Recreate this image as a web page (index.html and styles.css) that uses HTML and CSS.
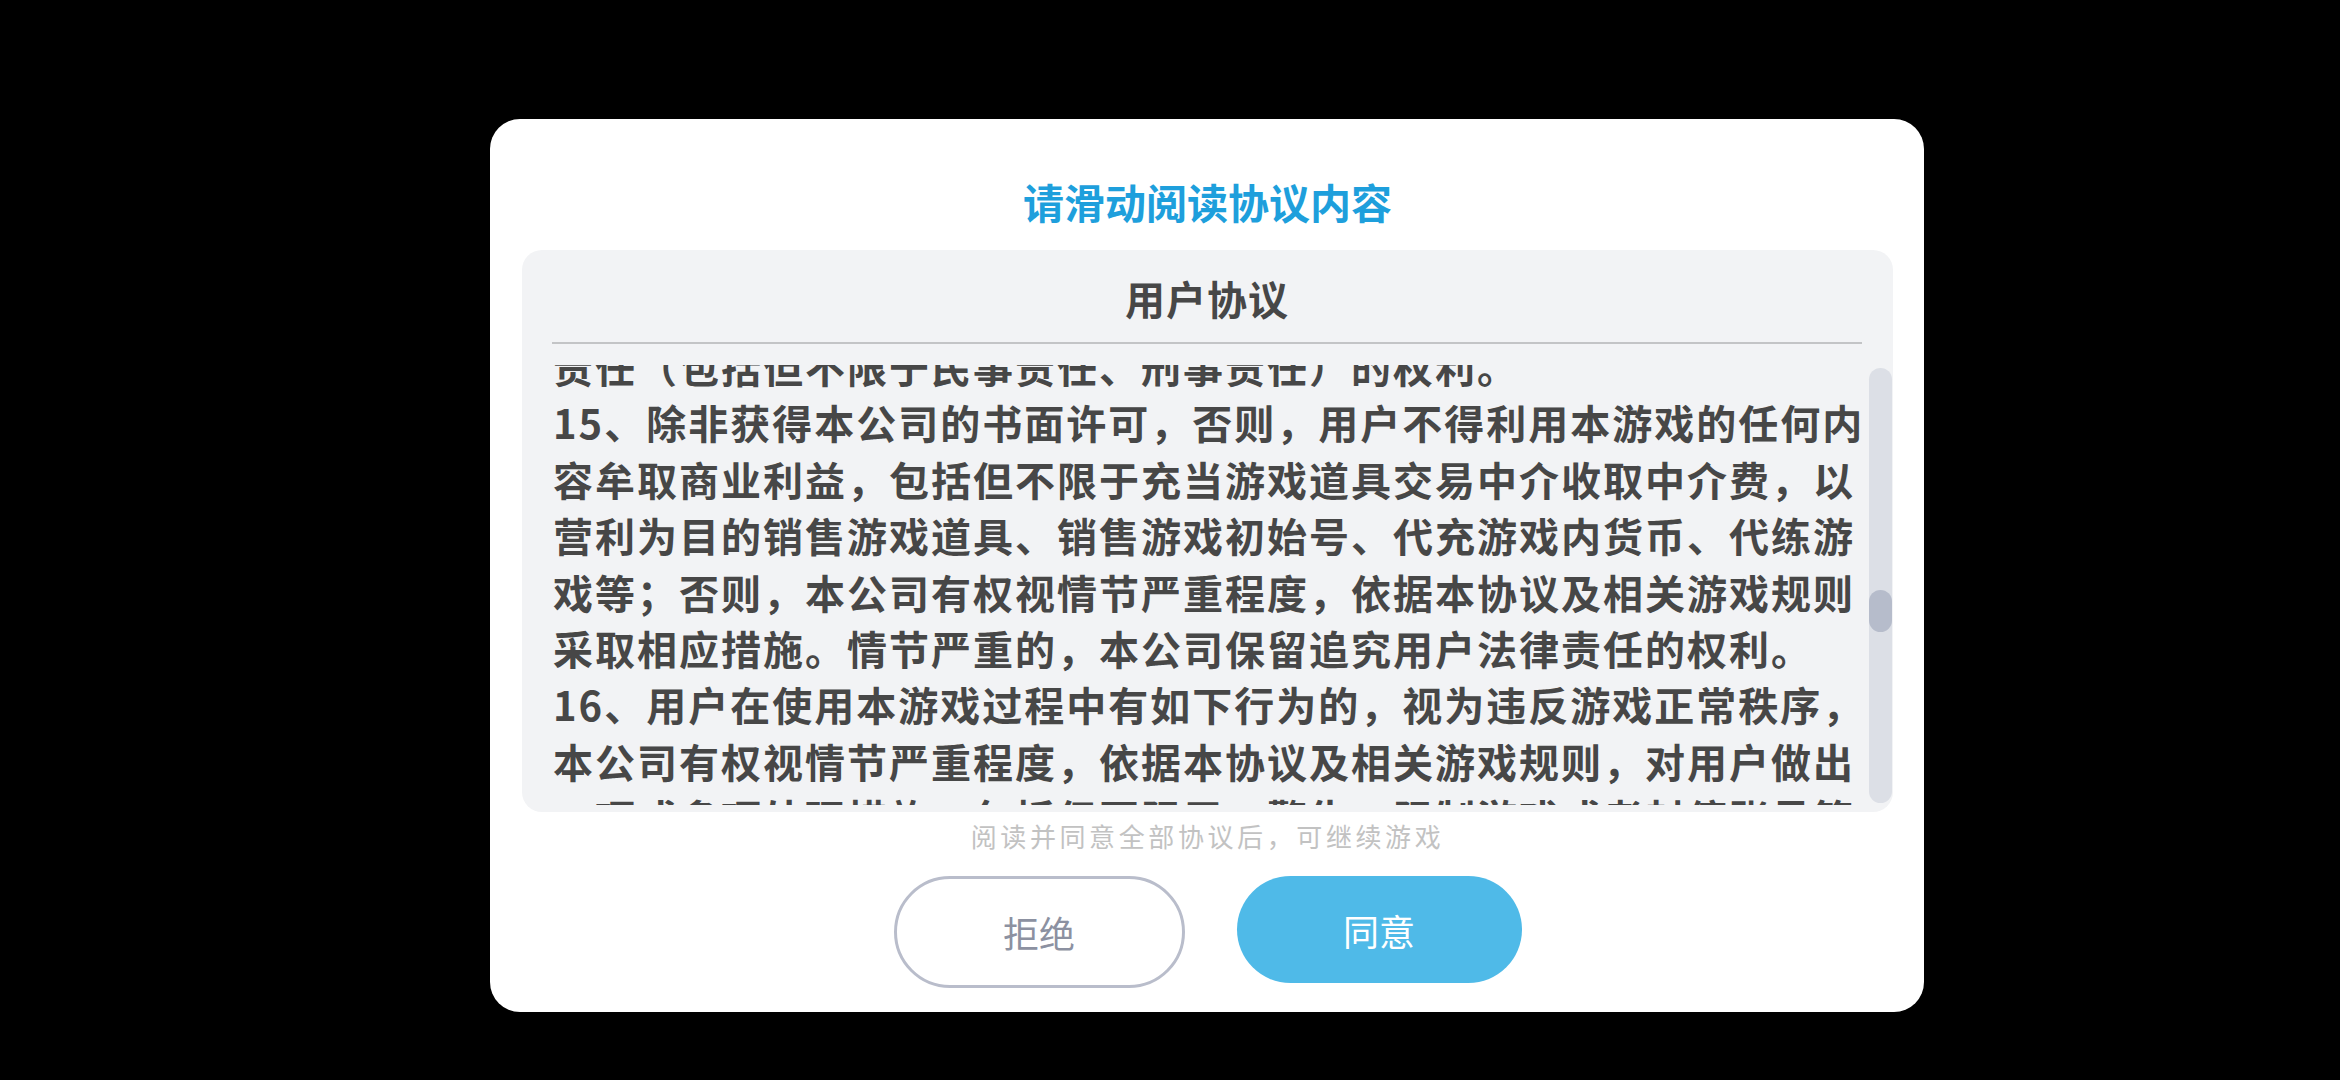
FILE: index.html
```html
<!DOCTYPE html>
<html lang="zh-CN">
<head>
    <meta charset="UTF-8" />
    <meta name="viewport" content="width=device-width, initial-scale=1.0"/>
    <title>用户协议</title>
    <link rel="stylesheet" href="styles.css">
</head>
<body>
<div class="dialog">
    <div class="dialog-title">请滑动阅读协议内容</div>

    <!-- Agreement panel -->
    <div class="panel">
        <div class="panel-header">用户协议</div>
        <div class="viewport">
            <p class="agreement">责任（包括但不限于民事责任、刑事责任）的权利。<br>15、除非获得本公司的书面许可，否则，用户不得利用本游戏的任何内<br>容牟取商业利益，包括但不限于充当游戏道具交易中介收取中介费，以<br>营利为目的销售游戏道具、销售游戏初始号、代充游戏内货币、代练游<br>戏等；否则，本公司有权视情节严重程度，依据本协议及相关游戏规则<br>采取相应措施。情节严重的，本公司保留追究用户法律责任的权利。<br>16、用户在使用本游戏过程中有如下行为的，视为违反游戏正常秩序，<br>本公司有权视情节严重程度，依据本协议及相关游戏规则，对用户做出<br>一项或多项处理措施，包括但不限于：警告、限制游戏或者封停账号等</p>
        </div>
        <div class="scrollbar">
            <div class="scroll-thumb"></div>
        </div>
    </div>

    <div class="hint">阅读并同意全部协议后，可继续游戏</div>

    <div class="actions">
        <button class="btn btn-reject">拒绝</button>
        <button class="btn btn-agree">同意</button>
    </div>
</div>
</body>
</html>
```

FILE: styles.css
```css
body {
    margin: 0;
    height: 100vh;
    background: #000;
    overflow: hidden;
    font-family: "Noto Sans CJK SC", "Noto Sans", sans-serif;
}

.dialog {
    box-sizing: border-box;
    width: 1434px;
    height: 893px;
    margin: 119px 0 0 490px;
    padding: 0 31px 24px 32px;
    background: #fff;
    border-radius: 30px;
    display: flex;
    flex-direction: column;
}

.dialog-title {
    padding-top: 52px;
    margin-bottom: 18px;
    line-height: 61px;
    font-size: 41px;
    font-weight: bold;
    color: #1e9fdc;
    text-align: center;
}

.panel {
    box-sizing: border-box;
    height: 562px;
    padding: 18px 1px 7px 30px;
    background: #f2f3f5;
    border-radius: 20px;
    display: grid;
    grid-template-columns: 1310px 23px;
    column-gap: 7px;
    align-items: start;
}

.panel-header {
    grid-column: 1 / 2;
    line-height: 60px;
    padding-bottom: 14px;
    border-bottom: 2px solid #c3c4c6;
    font-size: 40px;
    letter-spacing: 1px;
    font-weight: bold;
    color: #474747;
    text-align: center;
}

.viewport {
    grid-column: 1 / 2;
    height: 440px;
    margin-top: 21px;
    overflow: hidden;
}

.agreement {
    margin: -27px 0 0 1px;
    font-size: 40px;
    line-height: 56.4px;
    letter-spacing: 2px;
    font-weight: bold;
    color: #474747;
    white-space: nowrap;
}

.scrollbar {
    grid-column: 2 / 3;
    grid-row: 2 / 3;
    height: 435px;
    margin-top: 24px;
    background: #dcdfe6;
    border-radius: 12px;
    overflow: hidden;
}

.scroll-thumb {
    height: 42px;
    margin-top: 222px;
    background: #b6bccb;
    border-radius: 12px;
}

.hint {
    margin-top: 6px;
    line-height: 36px;
    font-size: 26px;
    letter-spacing: 3.6px;
    color: #c2c2c2;
    text-align: center;
}

.actions {
    margin-top: 22px;
    display: flex;
    justify-content: center;
    align-items: flex-start;
    gap: 52px;
}

.btn {
    box-sizing: border-box;
    border-radius: 60px;
    font-family: inherit;
    font-size: 36px;
    padding: 0;
}

.btn-reject {
    width: 291px;
    height: 112px;
    background: #fff;
    border: 3px solid #b9bdcb;
    color: #8c91a1;
}

.btn-agree {
    width: 285px;
    height: 107px;
    background: #4fbae8;
    border: none;
    color: #fff;
}
```
